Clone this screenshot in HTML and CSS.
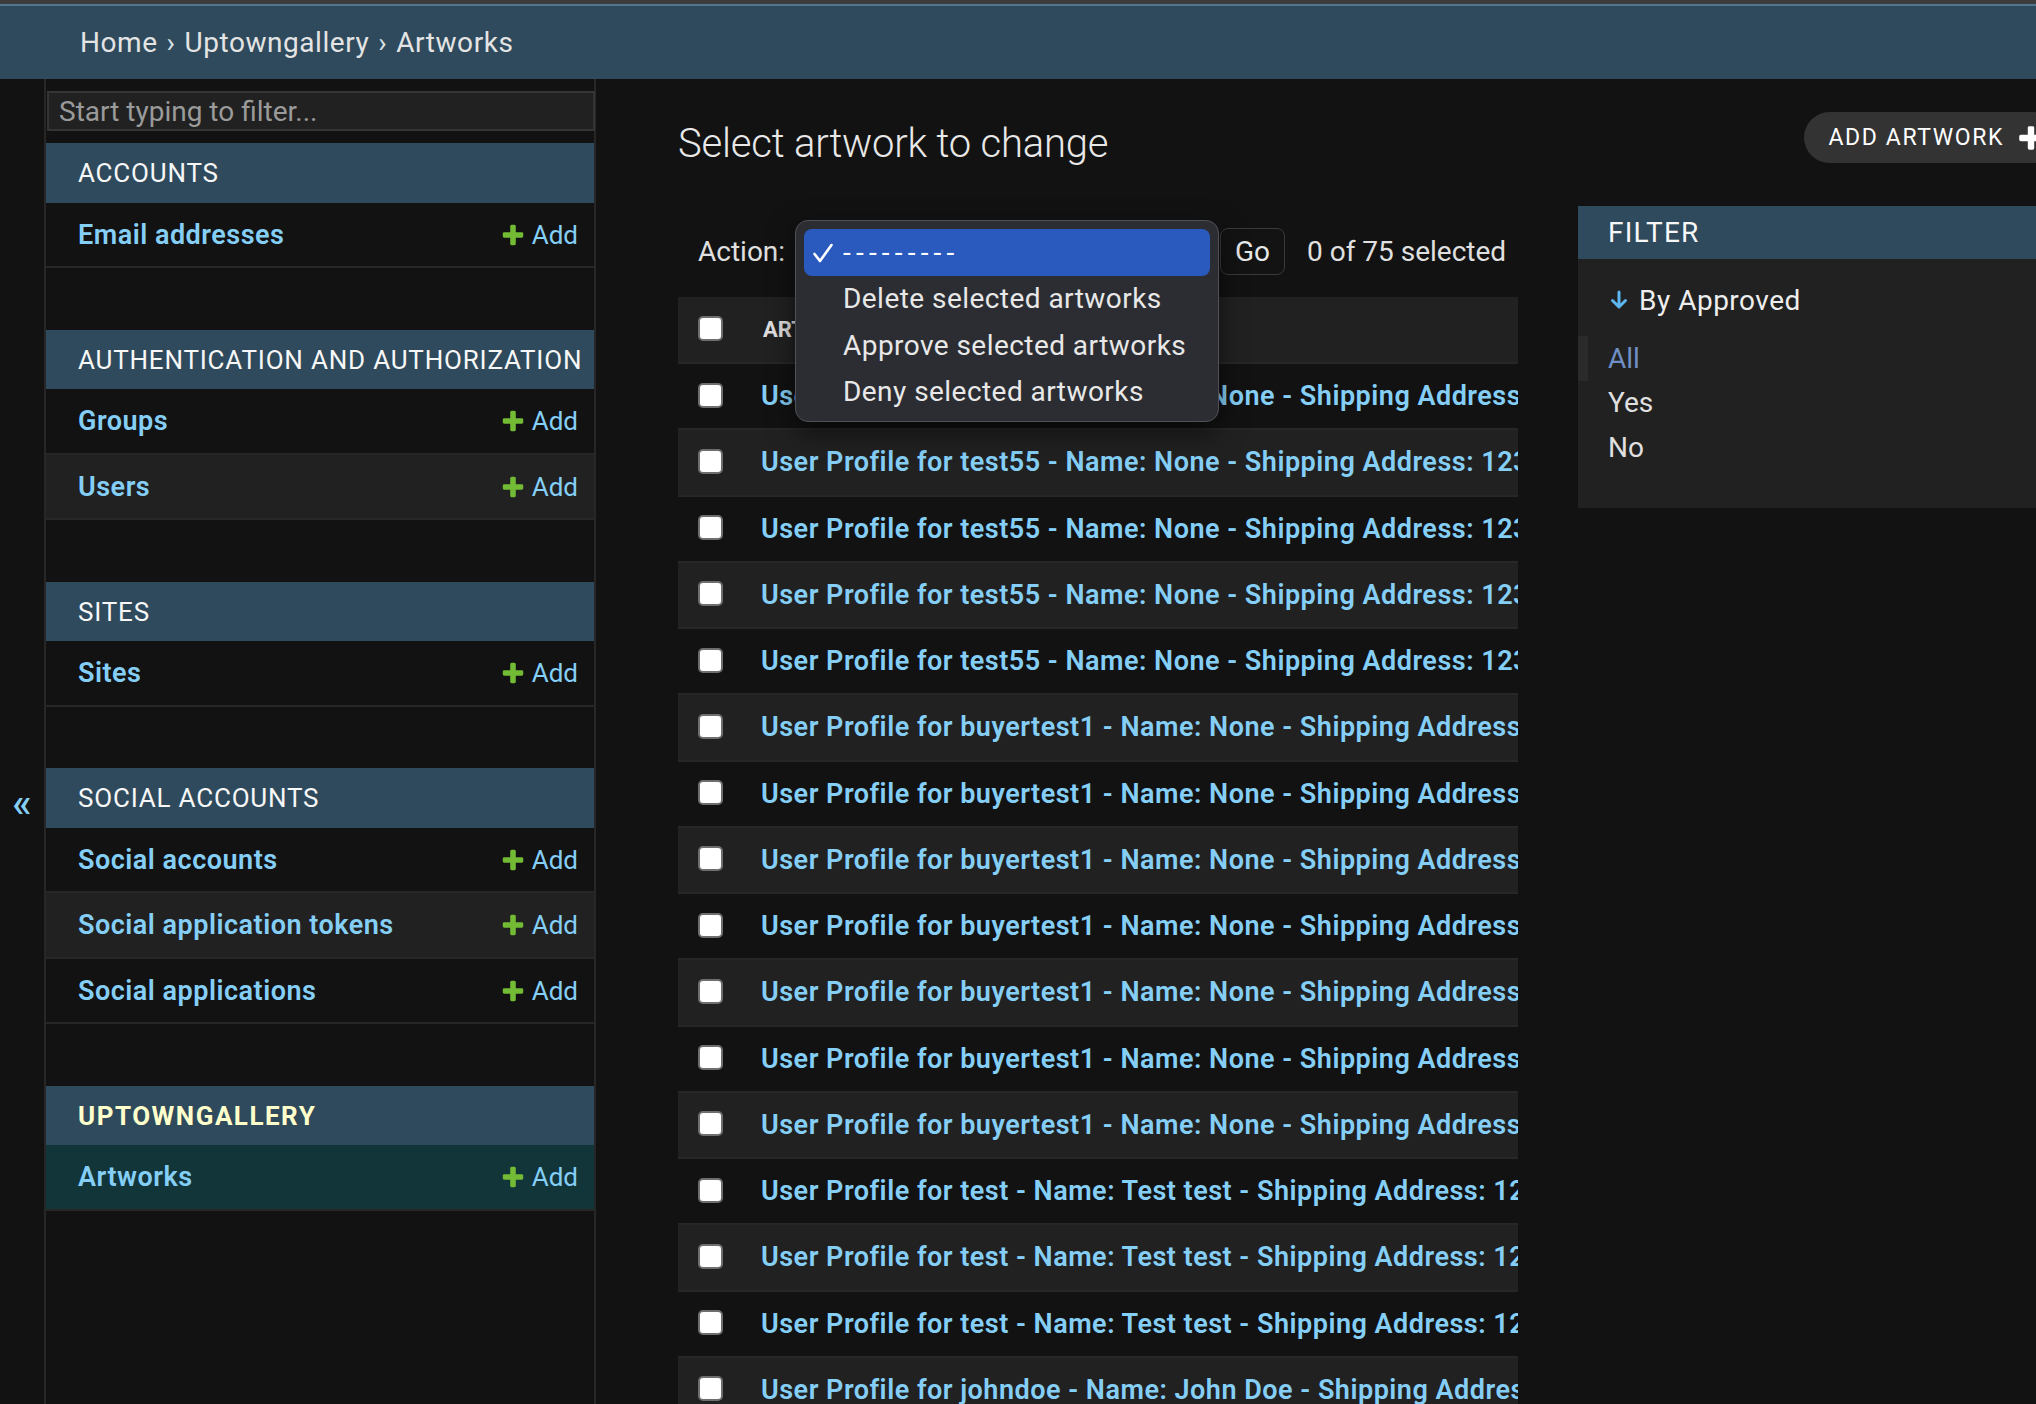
FILE: index.html
```html
<!DOCTYPE html>
<html lang="en">
<head>
<meta charset="utf-8">
<title>Select artwork to change</title>
<link rel="stylesheet" href="styles.css">
</head>
<body>
<div class="page">
  <div class="topstrip"></div>
  <nav class="breadcrumbs"><a>Home</a><span class="sep">›</span><a>Uptowngallery</a><span class="sep">›</span><span>Artworks</span></nav>
  <div class="main">
    <div class="toggle">«</div>
    <aside class="sidebar">
      <input class="nav-filter" type="text" placeholder="Start typing to filter...">
      <section class="module">
        <div class="caption">Accounts</div>
        <div class="mrow"><a class="model">Email addresses</a><a class="addlink"><svg viewBox="0 0 1792 1792" width="26" height="26"><path fill="#73bb35" d="M1600 796v192q0 40-28 68t-68 28h-416v416q0 40-28 68t-68 28h-192q-40 0-68-28t-28-68v-416h-416q-40 0-68-28t-28-68v-192q0-40 28-68t68-28h416v-416q0-40 28-68t68-28h192q40 0 68 28t28 68v416h416q40 0 68 28t28 68z"/></svg>Add</a></div>
      </section>
      <section class="module">
        <div class="caption">Authentication and Authorization</div>
        <div class="mrow"><a class="model">Groups</a><a class="addlink"><svg viewBox="0 0 1792 1792" width="26" height="26"><path fill="#73bb35" d="M1600 796v192q0 40-28 68t-68 28h-416v416q0 40-28 68t-68 28h-192q-40 0-68-28t-28-68v-416h-416q-40 0-68-28t-28-68v-192q0-40 28-68t68-28h416v-416q0-40 28-68t68-28h192q40 0 68 28t28 68v416h416q40 0 68 28t28 68z"/></svg>Add</a></div>
        <div class="mrow even"><a class="model">Users</a><a class="addlink"><svg viewBox="0 0 1792 1792" width="26" height="26"><path fill="#73bb35" d="M1600 796v192q0 40-28 68t-68 28h-416v416q0 40-28 68t-68 28h-192q-40 0-68-28t-28-68v-416h-416q-40 0-68-28t-28-68v-192q0-40 28-68t68-28h416v-416q0-40 28-68t68-28h192q40 0 68 28t28 68v416h416q40 0 68 28t28 68z"/></svg>Add</a></div>
      </section>
      <section class="module">
        <div class="caption">Sites</div>
        <div class="mrow"><a class="model">Sites</a><a class="addlink"><svg viewBox="0 0 1792 1792" width="26" height="26"><path fill="#73bb35" d="M1600 796v192q0 40-28 68t-68 28h-416v416q0 40-28 68t-68 28h-192q-40 0-68-28t-28-68v-416h-416q-40 0-68-28t-28-68v-192q0-40 28-68t68-28h416v-416q0-40 28-68t68-28h192q40 0 68 28t28 68v416h416q40 0 68 28t28 68z"/></svg>Add</a></div>
      </section>
      <section class="module">
        <div class="caption">Social Accounts</div>
        <div class="mrow"><a class="model">Social accounts</a><a class="addlink"><svg viewBox="0 0 1792 1792" width="26" height="26"><path fill="#73bb35" d="M1600 796v192q0 40-28 68t-68 28h-416v416q0 40-28 68t-68 28h-192q-40 0-68-28t-28-68v-416h-416q-40 0-68-28t-28-68v-192q0-40 28-68t68-28h416v-416q0-40 28-68t68-28h192q40 0 68 28t28 68v416h416q40 0 68 28t28 68z"/></svg>Add</a></div>
        <div class="mrow even"><a class="model">Social application tokens</a><a class="addlink"><svg viewBox="0 0 1792 1792" width="26" height="26"><path fill="#73bb35" d="M1600 796v192q0 40-28 68t-68 28h-416v416q0 40-28 68t-68 28h-192q-40 0-68-28t-28-68v-416h-416q-40 0-68-28t-28-68v-192q0-40 28-68t68-28h416v-416q0-40 28-68t68-28h192q40 0 68 28t28 68v416h416q40 0 68 28t28 68z"/></svg>Add</a></div>
        <div class="mrow"><a class="model">Social applications</a><a class="addlink"><svg viewBox="0 0 1792 1792" width="26" height="26"><path fill="#73bb35" d="M1600 796v192q0 40-28 68t-68 28h-416v416q0 40-28 68t-68 28h-192q-40 0-68-28t-28-68v-416h-416q-40 0-68-28t-28-68v-192q0-40 28-68t68-28h416v-416q0-40 28-68t68-28h192q40 0 68 28t28 68v416h416q40 0 68 28t28 68z"/></svg>Add</a></div>
      </section>
      <section class="module">
        <div class="caption current-app">Uptowngallery</div>
        <div class="mrow current-model"><a class="model">Artworks</a><a class="addlink"><svg viewBox="0 0 1792 1792" width="26" height="26"><path fill="#73bb35" d="M1600 796v192q0 40-28 68t-68 28h-416v416q0 40-28 68t-68 28h-192q-40 0-68-28t-28-68v-416h-416q-40 0-68-28t-28-68v-192q0-40 28-68t68-28h416v-416q0-40 28-68t68-28h192q40 0 68 28t28 68v416h416q40 0 68 28t28 68z"/></svg>Add</a></div>
      </section>
    </aside>
    <main class="content">
      <div class="title-row">
        <h1>Select artwork to change</h1>
        <a class="object-tool">Add artwork<svg viewBox="0 0 1792 1792" width="30" height="30"><path fill="#ffffff" d="M1600 796v192q0 40-28 68t-68 28h-416v416q0 40-28 68t-68 28h-192q-40 0-68-28t-28-68v-416h-416q-40 0-68-28t-28-68v-192q0-40 28-68t68-28h416v-416q0-40 28-68t68-28h192q40 0 68 28t28 68v416h416q40 0 68 28t28 68z"/></svg></a>
      </div>
      <div class="changelist">
        <div class="form-container">
          <div class="actions">
            <label class="action-label">Action:</label>
            <div class="select">
              <div class="popup">
                <div class="opt selected"><svg class="check" viewBox="0 0 20 20" width="20" height="20"><path d="M1.5 11 L7 18 L18.5 2" fill="none" stroke="#ffffff" stroke-width="2.6" stroke-linecap="round" stroke-linejoin="round"/></svg><span class="dashes">---------</span></div>
                <div class="opt">Delete selected artworks</div>
                <div class="opt">Approve selected artworks</div>
                <div class="opt">Deny selected artworks</div>
              </div>
            </div>
            <button class="go">Go</button>
            <span class="counter">0 of 75 selected</span>
          </div>
          <div class="results">
            <table class="result-list">
              <thead>
                <tr><th class="cbcol"><span class="cb"></span></th><th class="colhead">Artwork</th></tr>
              </thead>
              <tbody>
                <tr><td class="cbcol"><span class="cb"></span></td><th><a>User Profile for buyertest1 - Name: None - Shipping Address: 123 Main St</a></th></tr>
                <tr><td class="cbcol"><span class="cb"></span></td><th><a>User Profile for test55 - Name: None - Shipping Address: 123 Main St</a></th></tr>
                <tr><td class="cbcol"><span class="cb"></span></td><th><a>User Profile for test55 - Name: None - Shipping Address: 123 Main St</a></th></tr>
                <tr><td class="cbcol"><span class="cb"></span></td><th><a>User Profile for test55 - Name: None - Shipping Address: 123 Main St</a></th></tr>
                <tr><td class="cbcol"><span class="cb"></span></td><th><a>User Profile for test55 - Name: None - Shipping Address: 123 Main St</a></th></tr>
                <tr><td class="cbcol"><span class="cb"></span></td><th><a>User Profile for buyertest1 - Name: None - Shipping Address: 123 Main St</a></th></tr>
                <tr><td class="cbcol"><span class="cb"></span></td><th><a>User Profile for buyertest1 - Name: None - Shipping Address: 123 Main St</a></th></tr>
                <tr><td class="cbcol"><span class="cb"></span></td><th><a>User Profile for buyertest1 - Name: None - Shipping Address: 123 Main St</a></th></tr>
                <tr><td class="cbcol"><span class="cb"></span></td><th><a>User Profile for buyertest1 - Name: None - Shipping Address: 123 Main St</a></th></tr>
                <tr><td class="cbcol"><span class="cb"></span></td><th><a>User Profile for buyertest1 - Name: None - Shipping Address: 123 Main St</a></th></tr>
                <tr><td class="cbcol"><span class="cb"></span></td><th><a>User Profile for buyertest1 - Name: None - Shipping Address: 123 Main St</a></th></tr>
                <tr><td class="cbcol"><span class="cb"></span></td><th><a>User Profile for buyertest1 - Name: None - Shipping Address: 123 Main St</a></th></tr>
                <tr><td class="cbcol"><span class="cb"></span></td><th><a>User Profile for test - Name: Test test - Shipping Address: 123 Test St</a></th></tr>
                <tr><td class="cbcol"><span class="cb"></span></td><th><a>User Profile for test - Name: Test test - Shipping Address: 123 Test St</a></th></tr>
                <tr><td class="cbcol"><span class="cb"></span></td><th><a>User Profile for test - Name: Test test - Shipping Address: 123 Test St</a></th></tr>
                <tr><td class="cbcol"><span class="cb"></span></td><th><a>User Profile for johndoe - Name: John Doe - Shipping Address: 1 Elm St</a></th></tr>
              </tbody>
            </table>
          </div>
        </div>
        <div class="filter">
          <h2>Filter</h2>
          <div class="filter-title"><svg viewBox="0 0 18 20" width="18" height="20"><path d="M9 2 V17 M2.5 10.5 L9 17 L15.5 10.5" fill="none" stroke="#5cb6f2" stroke-width="3" stroke-linecap="round" stroke-linejoin="round"/></svg><span>By Approved</span></div>
          <ul class="filter-list">
            <li class="selected">All</li>
            <li>Yes</li>
            <li>No</li>
          </ul>
        </div>
      </div>
    </main>
  </div>
</div>
</body>
</html>
```

FILE: styles.css
```css
* { box-sizing: border-box; }

html, body {
  margin: 0;
  padding: 0;
  background: #121212;
  overflow: hidden;
}

body {
  width: 2036px;
  height: 1404px;
  font-family: Roboto, "Noto Sans", "Liberation Sans", sans-serif;
  color: #eeeeee;
}

a { text-decoration: none; }

.page {
  width: 2138px;
}

.topstrip {
  height: 4px;
  background: #3c3c3c;
}

.breadcrumbs {
  height: 75px;
  background: #2e4a5c;
  border-top: 2px solid #517690;
  padding: 0 80px;
  display: flex;
  align-items: center;
  font-size: 28px;
  letter-spacing: 0.55px;
  color: #e4e4e4;
}

.breadcrumbs .sep {
  margin: 0 9px;
  color: #dde3e8;
}

.main {
  display: flex;
  align-items: flex-start;
}

.toggle {
  flex: 0 0 46px;
  height: 1448px;
  border-right: 2px solid #272727;
  display: flex;
  align-items: center;
  justify-content: center;
  font-size: 40px;
  font-weight: 500;
  color: #85cff7;
}

.sidebar {
  flex: 0 0 550px;
  min-height: 1330px;
  border-right: 2px solid #272727;
  padding-top: 12px;
}

.nav-filter {
  display: block;
  width: 100%;
  height: 40px;
  margin: 0 0 12.3px 1px;
  padding: 0 10px;
  border: 2px solid #353535;
  background: #212121;
  color: #eee;
  font-family: inherit;
  font-size: 28px;
  outline: none;
}

.nav-filter::placeholder {
  color: #9a9a9a;
}

.module {
  margin-bottom: 61.5px;
}

.caption {
  height: 59.5px;
  display: flex;
  align-items: center;
  padding-left: 32px;
  background: #2e4a5c;
  color: #f7f7f7;
  font-size: 26px;
  letter-spacing: 0.8px;
  text-transform: uppercase;
  white-space: nowrap;
  overflow: hidden;
}

.caption.current-app {
  color: #ffffcc;
  font-weight: 700;
  letter-spacing: 1.5px;
}

.mrow {
  height: 65.5px;
  display: flex;
  align-items: center;
  justify-content: space-between;
  padding: 0 16px 0 32px;
  border-bottom: 2px solid #272727;
  font-size: 26px;
}

.mrow.even { background: #212121; }
.mrow.current-model { background: #12353a; }

.model {
  color: #85cff7;
  font-weight: 600;
  font-size: 27px;
  letter-spacing: 0.5px;
}

.addlink {
  display: inline-flex;
  align-items: center;
  color: #85cff7;
}

.addlink svg {
  margin-right: 6px;
}

.content {
  flex: 1 1 auto;
  min-width: 0;
  padding: 41px 80px 0 82px;
}

.title-row {
  display: flex;
  justify-content: space-between;
  align-items: flex-start;
}

h1 {
  margin: 0;
  font-size: 40px;
  line-height: 48px;
  font-weight: 300;
  letter-spacing: -0.2px;
  color: #e8e8e8;
}

.object-tool {
  margin-top: -8px;
  height: 51px;
  display: flex;
  align-items: center;
  gap: 12px;
  padding: 0 12px 0 24px;
  border-radius: 26px;
  background: #333333;
  color: #ffffff;
  font-size: 23px;
  letter-spacing: 1.6px;
  text-transform: uppercase;
}

.changelist {
  display: flex;
  align-items: flex-start;
  margin-top: 38px;
}

.form-container {
  flex: 1 1 auto;
  min-width: 0;
}

.actions {
  height: 91px;
  display: flex;
  align-items: center;
  padding: 0 20px;
  font-size: 28px;
  color: #e0e0e0;
}

.action-label {
  flex: 0 0 98px;
}

.select {
  position: relative;
  flex: 0 0 416px;
  height: 47px;
}

.popup {
  position: absolute;
  left: -1px;
  top: -8px;
  width: 424px;
  height: 202px;
  padding: 8px 8px 0 8px;
  background: #2b2d32;
  border: 1.5px solid #4f5156;
  border-radius: 13px;
  box-shadow: 0 10px 28px rgba(0, 0, 0, 0.55);
  z-index: 10;
}

.opt {
  position: relative;
  height: 46.5px;
  display: flex;
  align-items: center;
  padding-left: 39px;
  border-radius: 8px;
  color: #e8e8e8;
  font-size: 28px;
  letter-spacing: 0.45px;
}

.opt.selected {
  background: #2b5abf;
  color: #ffffff;
}

.check {
  position: absolute;
  left: 9px;
  top: 14px;
}

.dashes {
  letter-spacing: 5.2px;
}

.go {
  flex: 0 0 65px;
  height: 47px;
  margin-left: 8px;
  border: 1.5px solid #3a3a3a;
  border-radius: 8px;
  background: #131313;
  color: #e8e8e8;
  font-family: inherit;
  font-size: 28px;
  padding: 0;
}

.counter {
  margin-left: 22px;
  white-space: nowrap;
}

.results {
  overflow: hidden;
  width: 100%;
}

.result-list {
  border-collapse: collapse;
  min-width: 100%;
  white-space: nowrap;
}

.result-list th,
.result-list td {
  padding: 0;
  text-align: left;
  vertical-align: middle;
  border-bottom: 2px solid #272727;
}

.result-list thead th {
  height: 66px;
  background: #212121;
}

.result-list tbody td,
.result-list tbody th {
  height: 66.25px;
}

.result-list tbody tr:nth-child(even) td,
.result-list tbody tr:nth-child(even) th {
  background: #212121;
}

.result-list .cbcol {
  width: 63px;
  min-width: 63px;
  padding: 0 18px 0 20px;
}

.cb {
  display: block;
  width: 25px;
  height: 25px;
  margin-top: -2px;
  background: #ffffff;
  border: 2px solid #6e6e6e;
  border-radius: 5px;
}

.result-list .colhead {
  padding-left: 22px;
  font-size: 22px;
  font-weight: 700;
  color: #e0e0e0;
  text-transform: uppercase;
}

.result-list tbody th {
  padding-left: 20px;
  font-size: 27px;
  font-weight: 600;
  letter-spacing: 0.5px;
}

.result-list tbody th a {
  color: #85cff7;
}

.filter {
  flex: 0 0 480px;
  margin-left: 60px;
  background: #212121;
  padding-bottom: 38.5px;
}

.filter h2 {
  margin: 0;
  height: 53px;
  display: flex;
  align-items: center;
  padding-left: 30px;
  background: #2e4a5c;
  color: #f7f7f7;
  font-size: 28px;
  font-weight: 400;
  letter-spacing: 1.2px;
  text-transform: uppercase;
}

.filter-title {
  margin-top: 21px;
  height: 40px;
  display: flex;
  align-items: center;
  gap: 11px;
  padding-left: 32px;
  font-size: 28px;
  letter-spacing: 0.5px;
  color: #eeeeee;
}

.filter-list {
  list-style: none;
  margin: 16px 0 0;
  padding: 0;
}

.filter-list li {
  height: 44.5px;
  display: flex;
  align-items: center;
  padding-left: 30px;
  font-size: 28px;
  color: #e0e0e0;
}

.filter-list li.selected {
  border-left: 10px solid #2a2a2a;
  padding-left: 20px;
  color: #6f8fc4;
}
```
